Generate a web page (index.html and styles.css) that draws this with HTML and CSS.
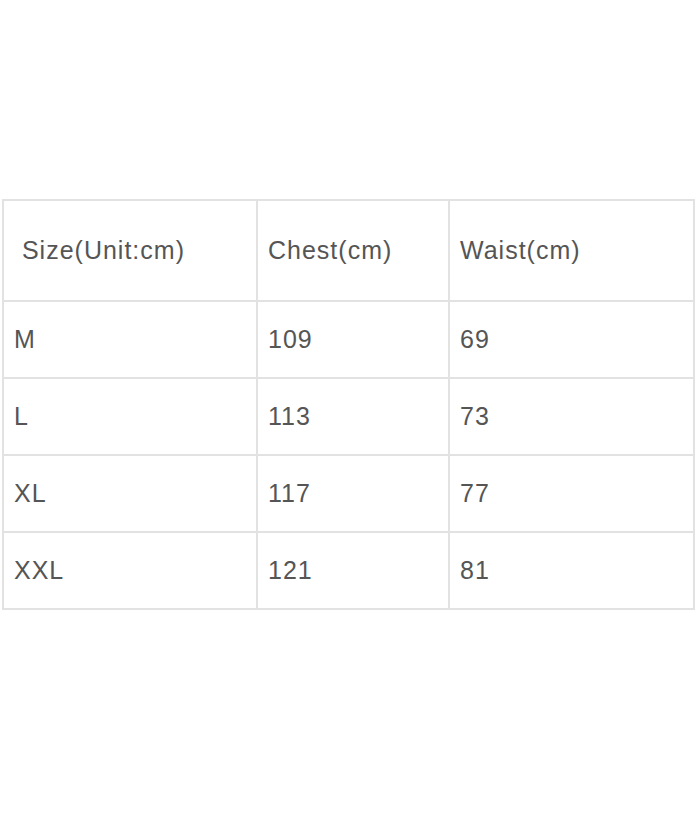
FILE: index.html
```html
<!DOCTYPE html>
<html>
<head>
<meta charset="utf-8">
<link rel="stylesheet" href="styles.css">
</head>
<body>
<div class="page">
  <table class="size-table">
    <colgroup>
      <col class="c1"><col class="c2"><col class="c3">
    </colgroup>
    <tr class="head">
      <td>&nbsp;Size(Unit:cm)</td>
      <td>Chest(cm)</td>
      <td>Waist(cm)</td>
    </tr>
    <tr><td>M</td><td>109</td><td>69</td></tr>
    <tr><td>L</td><td>113</td><td>73</td></tr>
    <tr><td>XL</td><td>117</td><td>77</td></tr>
    <tr><td>XXL</td><td>121</td><td>81</td></tr>
  </table>
</div>
</body>
</html>
```

FILE: styles.css
```css
html, body {
  margin: 0;
  padding: 0;
  background: #fff;
}
.page {
  padding: 199px 0 0 2px;
}
.size-table {
  border-collapse: collapse;
  width: 691px;
  table-layout: fixed;
  font-family: "Liberation Sans", Arial, sans-serif;
  font-size: 25px;
  letter-spacing: 1px;
  color: #555;
}
.c1 { width: 254px; }
.c2 { width: 192px; }
.c3 { width: 245px; }
.size-table td {
  border: 2px solid #e2e2e2;
  padding: 0 0 0 10px;
  height: 75px;
  vertical-align: middle;
  white-space: nowrap;
}
.size-table .head td {
  height: 99px;
}
```
